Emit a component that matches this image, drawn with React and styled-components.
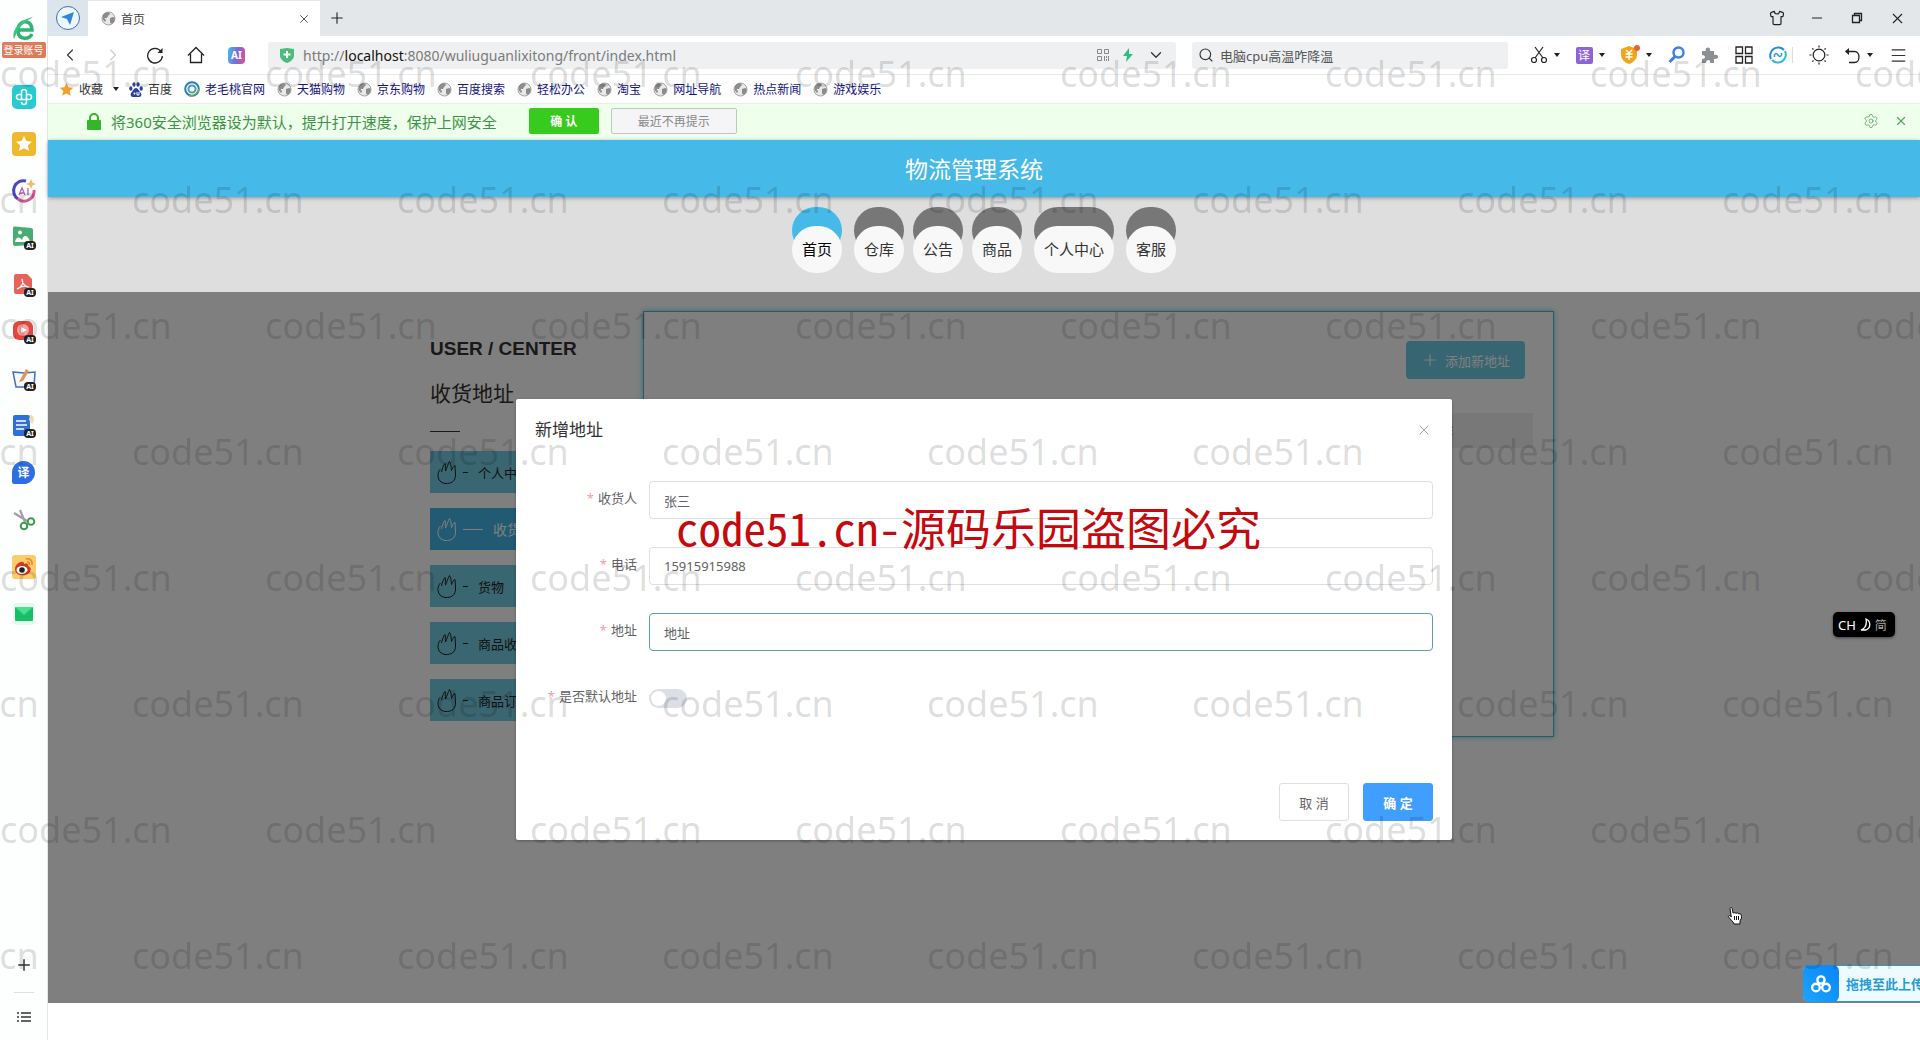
import React, { useState } from 'react';
import styled, { createGlobalStyle } from 'styled-components';
import { Shirt, Minus, X, Plus, ChevronLeft, ChevronRight, ChevronDown, Search, Menu, Settings } from 'lucide-react';

const GlobalStyle = createGlobalStyle`
  * { box-sizing: border-box; }
  body {
    margin: 0;
    overflow: hidden;
    background: #fff;
    font-family: 'Noto Sans', 'Noto Sans CJK SC', sans-serif;
    font-size: 13px;
    color: #333;
  }
  button, input { font-family: inherit; }
  button { padding: 0; border: 0; background: none; color: inherit; }
  a { text-decoration: none; color: inherit; }
  svg { display: block; flex: none; }
`;

const Screen = styled.div`
  position: relative;
  display: flex;
  height: 100vh;
  overflow: hidden;
`;

/* ---------- side bar ---------- */

const SideBar = styled.aside`
  flex: none;
  width: 48px;
  display: flex;
  flex-direction: column;
  align-items: center;
  border-right: 1px solid #e3e5e8;
  background: #fdfefe;
`;

const Account = styled.button`
  height: 73px;
  padding-top: 16px;
  display: flex;
  flex-direction: column;
  align-items: center;
`;

const AccountTag = styled.span`
  width: 44px;
  height: 16px;
  border-radius: 2px;
  background: #dd7c5c;
  color: #fff;
  font-size: 10px;
  line-height: 16px;
  text-align: center;
`;

const SideButton = styled.button`
  position: relative;
  width: 47px;
  height: 47px;
  display: flex;
  align-items: center;
  justify-content: center;
`;

const AiTag = styled.span`
  position: absolute;
  right: 11px;
  bottom: 11px;
  width: 12px;
  height: 9px;
  border-radius: 4px;
  background: #222;
  color: #fff;
  font-size: 7px;
  font-weight: 700;
  line-height: 9px;
`;

const SideBottom = styled.div`
  margin-top: auto;
  display: flex;
  flex-direction: column;
  align-items: center;
  color: #333;

  hr {
    width: 20px;
    margin: 4px 0 0;
    border: 0;
    border-top: 1px solid #e0e0e0;
  }
`;

/* ---------- browser chrome ---------- */

const Browser = styled.div`
  flex: 1;
  min-width: 0;
  display: flex;
  flex-direction: column;
`;

const TabBar = styled.div`
  height: 36px;
  flex: none;
  display: flex;
  align-items: center;
  background: #e3e7ea;
  color: #222;
`;

const Compass = styled.button`
  width: 40px;
  height: 36px;
  display: flex;
  align-items: center;
  justify-content: center;
  background: #dce4ec;
`;

const Tab = styled.div`
  width: 232px;
  height: 35px;
  margin-top: 1px;
  padding: 0 9px 0 13px;
  display: flex;
  align-items: center;
  gap: 5px;
  background: #fff;
  font-size: 12px;
  color: #444;

  button { margin-left: auto; }
`;

const NewTab = styled.button`
  margin-left: 8px;
`;

const WindowButtons = styled.div`
  margin-left: auto;
  padding-right: 14px;
  display: flex;
  align-items: center;
  gap: 24px;
`;

const ToolBar = styled.div`
  height: 39px;
  flex: none;
  padding: 0 12px;
  display: flex;
  align-items: center;
  border-bottom: 1px solid #ebebeb;
  color: #333;
`;

const NavButtons = styled.div`
  width: 208px;
  display: flex;
  align-items: center;
  gap: 23px;
`;

const Address = styled.div`
  flex: 1;
  height: 27px;
  padding: 0 11px;
  display: flex;
  align-items: center;
  border-radius: 3px;
  background: #eff0f2;
`;

const Url = styled.div`
  flex: 1;
  padding-left: 8px;
  font-size: 14px;
  color: #7b7b7b;
  white-space: nowrap;

  b { font-weight: 400; color: #111; }
`;

const AddressIcons = styled.div`
  display: flex;
  align-items: center;
  gap: 13px;
`;

const SearchBox = styled.label`
  width: 316px;
  height: 27px;
  margin-left: 16px;
  padding: 0 6px;
  display: flex;
  align-items: center;
  gap: 6px;
  border-radius: 3px;
  background: #eff0f2;

  input {
    flex: 1;
    min-width: 0;
    padding: 0;
    border: 0;
    outline: 0;
    background: none;
    font-size: 13px;
    color: #555;
  }
`;

const Tools = styled.div`
  width: 400px;
  padding-left: 22px;
  display: flex;
  align-items: center;
  justify-content: space-between;
`;

const Tool = styled.button`
  display: flex;
  align-items: center;
  gap: 6px;
`;

const Caret = styled.i`
  border: 3px solid transparent;
  border-top: 4px solid #222;
  border-bottom: 0;
`;

const ToolDivider = styled.i`
  width: 1px;
  height: 16px;
  margin-left: -10px;
  background: #ddd;
`;

const Translate = styled.span`
  width: ${(p) => p.$size}px;
  height: ${(p) => p.$size}px;
  border-radius: ${(p) => (p.$round ? '50% 50% 50% 2px' : '2px')};
  background: ${(p) => (p.$round ? '#2d6fe0' : '#8d63d6')};
  color: #fff;
  font-size: 12px;
  font-weight: ${(p) => (p.$round ? 700 : 400)};
  line-height: ${(p) => p.$size}px;
  text-align: center;
`;

const AiLogo = styled.span`
  display: block;
  width: 17px;
  height: 17px;
  border-radius: 4px;
  background: linear-gradient(100deg, #3fc1ee, #7a6ad8 50%, #e24d9c);
  color: #fff;
  font-size: 10px;
  font-weight: 700;
  line-height: 17px;
  text-align: center;
`;

const Bookmarks = styled.nav`
  height: 29px;
  flex: none;
  padding-left: 11px;
  display: flex;
  align-items: center;
  gap: 12px;
  border-bottom: 1px solid #ececec;
  background: #fff;

  ${Caret} { margin: 0 -2px; }
`;

const Bookmark = styled.a`
  display: flex;
  align-items: center;
  gap: 5px;
  font-size: 12px;
  white-space: nowrap;
  color: ${(p) => (p.$plain ? '#333' : '#15157e')};
`;

const Notice = styled.div`
  height: 36px;
  flex: none;
  padding: 0 12px 2px 39px;
  display: flex;
  align-items: center;
  background: #eeffec;
  color: #3f9148;
`;

const NoticeText = styled.span`
  margin: 0 32px 0 10px;
  font-size: 15px;
  white-space: nowrap;
`;

const NoticeButton = styled.button`
  width: ${(p) => (p.$primary ? 70 : 126)}px;
  height: 26px;
  margin-right: 12px;
  border: 1px solid ${(p) => (p.$primary ? '#36cb1d' : '#c2c6c2')};
  border-radius: 2px;
  background: ${(p) => (p.$primary ? '#36cb1d' : '#f5f5f7')};
  color: ${(p) => (p.$primary ? '#fff' : '#888')};
  font-size: 12px;
  font-weight: ${(p) => (p.$primary ? 700 : 400)};
`;

const NoticeTools = styled.div`
  margin-left: auto;
  display: flex;
  align-items: center;
  gap: 15px;
  color: #5aa55f;
`;

/* ---------- site ---------- */

const SiteHeader = styled.header`
  position: relative;
  height: 57px;
  flex: none;
  padding: 0 20px 2px 0;
  display: flex;
  align-items: center;
  justify-content: center;
  background: #45bae8;
  box-shadow: 0 1px 4px rgba(0, 0, 0, 0.35);
  color: #fff;

  h1 {
    margin: 0;
    font-size: 23px;
    font-weight: 400;
  }
`;

const SiteNav = styled.nav`
  height: 95px;
  flex: none;
  padding: 29px 3px 0 0;
  display: flex;
  justify-content: center;
  gap: 9px;
  background: #dedede;
`;

const NavPill = styled.a`
  height: 47px;
  margin: 0 ${(p) => (p.$spaced ? 3 : 0)}px;
  padding: 0 10px;
  border-radius: 24px;
  background: #f8f8f8;
  box-shadow: 0 -19px 0 ${(p) => (p.$active ? '#45bae8' : '#777')};
  color: ${(p) => (p.$active ? '#000' : '#333')};
  font-size: 15px;
  line-height: 46px;
`;

const Main = styled.main`
  position: relative;
  flex: 1;
  min-height: 0;
  padding: 19px 0 0 16px;
`;

const Content = styled.div`
  max-width: 1124px;
  margin: 0 auto;
  display: flex;
  gap: 21px;
`;

const UserMenu = styled.div`
  width: 192px;
  padding-top: 24px;

  h2 {
    margin: 0;
    font: bold 19px/28px 'Liberation Sans', sans-serif;
  }

  h3 {
    margin: 14px 0 0;
    font-size: 21px;
    font-weight: 400;
    line-height: 32px;
  }
`;

const ShortLine = styled.hr`
  width: 30px;
  margin: 22px 0 19px;
  border: 0;
  border-top: 1px solid #333;
`;

const MenuItem = styled.a`
  height: 42px;
  margin-bottom: 15px;
  padding-left: 7px;
  display: flex;
  align-items: center;
  gap: 6px;
  background: ${(p) => (p.$active ? '#45b4e6' : '#74cce2')};
  color: ${(p) => (p.$active ? '#fff' : '#222')};
  font-size: ${(p) => (p.$active ? 14 : 13)}px;
  white-space: nowrap;

  i {
    width: ${(p) => (p.$active ? 20 : 5)}px;
    margin-right: 4px;
    border-top: 1px solid;
  }
`;

const Panel = styled.section`
  flex: 1;
  height: 426px;
  padding: 29px 20px;
  border: 1px solid #4fb4cc;
  box-shadow: 0 0 6px #6fd3e6;
`;

const AddButton = styled.button`
  width: 119px;
  height: 38px;
  margin: 0 8px 34px auto;
  display: flex;
  align-items: center;
  justify-content: center;
  gap: 6px;
  border-radius: 4px;
  background: #6fcbe4;
  color: #fff;
  font-size: 13px;
`;

const AddressTable = styled.table`
  width: 100%;
  border-collapse: collapse;
  table-layout: fixed;

  th {
    height: 35px;
    padding: 0 12px 0 0;
    background: #f1f1f1;
    font-size: 13px;
    font-weight: 400;
  }
`;

const Mask = styled.div`
  position: absolute;
  inset: 0;
  padding-top: 107px;
  background: rgba(0, 0, 0, 0.5);
`;

const Dialog = styled.form`
  width: 50%;
  margin: 0 auto;
  border-radius: 2px;
  background: #fff;
  box-shadow: 0 1px 3px rgba(0, 0, 0, 0.3);
`;

const DialogHead = styled.div`
  padding: 20px 20px 10px 19px;
  display: flex;
  align-items: center;
  justify-content: space-between;
  color: #303133;
  font-size: 17px;
  line-height: 22px;
`;

const DialogBody = styled.div`
  padding: 30px 19px 28px;
`;

const Field = styled.div`
  height: 38px;
  margin-bottom: 28px;
  display: flex;
  align-items: center;

  label {
    width: 114px;
    padding-right: 12px;
    color: #606266;
    font-size: 13px;
    line-height: 34px;
    text-align: right;
    align-self: flex-start;
    white-space: nowrap;
  }

  label::before {
    content: '*';
    margin-right: 4px;
    color: #f3a0a0;
  }
`;

const TextInput = styled.input`
  flex: 1;
  min-width: 0;
  height: 38px;
  padding: 0 14px;
  border: 1px solid ${(p) => (p.$focused ? '#5a9fa8' : '#dcdfe3')};
  border-radius: 4px;
  outline: 0;
  color: #606266;
  font-size: 13px;
`;

const Switch = styled.input`
  appearance: none;
  width: 38px;
  height: 19px;
  margin: 0;
  border-radius: 10px;
  background: #dcdfe6;

  &::before {
    content: '';
    display: block;
    width: 15px;
    height: 15px;
    margin: 2px;
    border-radius: 50%;
    background: #fff;
  }

  &:checked { background: #409eff; }
  &:checked::before { margin-left: 21px; }
`;

const DialogFoot = styled.div`
  padding: 10px 19px 19px;
  display: flex;
  justify-content: flex-end;
  gap: 14px;
`;

const DialogButton = styled.button`
  width: 70px;
  height: 38px;
  border: 1px solid ${(p) => (p.$primary ? '#409eff' : '#dcdfe6')};
  border-radius: 3px;
  background: ${(p) => (p.$primary ? '#409eff' : '#fff')};
  color: ${(p) => (p.$primary ? '#fff' : '#606266')};
  font-size: 13px;
  font-weight: ${(p) => (p.$primary ? 700 : 400)};
`;

const StatusBar = styled.footer`
  height: 37px;
  flex: none;
  background: #fff;
`;

/* ---------- floating things ---------- */

const ImeBadge = styled.div`
  position: absolute;
  right: 25px;
  top: 612px;
  width: 62px;
  height: 25px;
  padding-left: 5px;
  display: flex;
  align-items: center;
  gap: 4px;
  border-radius: 5px;
  background: #000;
  box-shadow: 0 1px 3px rgba(0, 0, 0, 0.5);
  color: #fff;
  font-size: 13px;

  small { font-size: 12px; color: #aaa; }
`;

const UploadDock = styled.button`
  position: absolute;
  left: calc(100% - 117px);
  bottom: 38px;
  height: 37px;
  width: 140px;
  display: flex;
  align-items: center;
  gap: 7px;
  border-top: 1px solid #3f93bb;
  border-bottom: 1px solid #3f93bb;
  border-radius: 6px 0 0 6px;
  background: #ecfbff;
  color: #2a9bd2;
  font-size: 13px;
  font-weight: 700;
  white-space: nowrap;
`;

const DockIcon = styled.span`
  width: 36px;
  height: 37px;
  display: flex;
  align-items: center;
  justify-content: center;
  border-radius: 6px;
  background: linear-gradient(225deg, #0a84f8, #1ba5fb);
`;

const Pointer = styled.svg`
  position: absolute;
  left: 1727px;
  top: 907px;
`;

const Watermarks = styled.div`
  position: absolute;
  inset: 0;
  padding-top: 11px;
  overflow: hidden;
  pointer-events: none;
`;

const WatermarkRow = styled.div`
  display: flex;
  margin-left: ${(p) => (p.$shifted ? -133 : 0)}px;

  span {
    flex: none;
    width: 265px;
    font: 400 36px/126px 'Noto Sans', sans-serif;
    color: rgba(0, 0, 0, 0.15);
  }
`;

const RedMark = styled.div`
  position: absolute;
  left: 676px;
  top: 495px;
  color: #c40a0e;
  font: 400 45px/64px 'Noto Sans CJK SC', sans-serif;
  font-feature-settings: 'hwid';
  white-space: nowrap;
  pointer-events: none;
`;

/* ---------- drawings ---------- */

const Globe = () => (
  <svg width="15" height="15" viewBox="0 0 15 15">
    <circle cx="7.500" cy="7.500" r="6.500" fill="#e8e8e8" stroke="#a5a5a5" />
    <path d="M2 4C4 1 7 1 8 1.500L9 3 7 5 6 7 3.500 7 5 9.500 4 11 1.500 8zM9 7l3-1 2 1-1 4-3 2-1-2z" fill="#8b8b8b" />
  </svg>
);

const Star = ({ size, fill }) => (
  <svg width={size} height={size} viewBox="0 0 24 24">
    <path d="M12 1.500l3.200 7 7.600.8-5.700 5.200 1.700 7.600L12 18.200l-6.800 3.900 1.700-7.600L1.200 9.300l7.600-.8z" fill={fill} />
  </svg>
);

const Flame = () => (
  <svg width="20" height="25" viewBox="0 0 20 25" fill="none" stroke="currentColor" strokeWidth="1">
    <path d="M3.500 9C0 12-1 22 8 23.500c7 .5 11-3 10.500-9.500L18 5.500c-1.500.5-2.500 2.500-3.500 5C14 8 14.500 4 12.500 1.500 11 4 10 8 8.500 11 8 8 9 5 8 3.500 6.500 5 5.500 8 4.500 12" />
  </svg>
);

const Logo = () => (
  <svg width="26" height="26" viewBox="0 0 26 26" fill="none">
    <path d="M21 18c-3 6-13 6-14-2C6 8 12 5 16 6c4 1 5 5 5 8H8" stroke="#2fb573" strokeWidth="3.500" />
    <path d="M3 23C0 14 10 3 22 1c-5 3-12 7-16 15z" fill="#3cc483" />
  </svg>
);

const sideIcons = [
  {
    name: '健康',
    icon: (
      <svg width="24" height="24" viewBox="0 0 24 24">
        <rect width="24" height="24" rx="5" fill="#25cbd0" />
        <path d="M9.500 14V7a2.500 2.500 0 015 0v10a2.500 2.500 0 01-5 0M14 9.500h3a2.500 2.500 0 010 5H7a2.500 2.500 0 010-5h2" fill="none" stroke="#fff" strokeWidth="1.500" />
      </svg>
    ),
  },
  {
    name: '收藏夹',
    icon: (
      <svg width="24" height="24" viewBox="0 0 24 24">
        <rect width="24" height="24" rx="4" fill="#efb92d" />
        <path d="M12 4l2.400 5 5.600.7-4.100 3.800 1.100 5.500-5-2.700L7 19l1.100-5.500L4 9.700 9.600 9z" fill="#fff" />
      </svg>
    ),
  },
  {
    name: 'AI 助手',
    icon: (
      <svg width="26" height="26" viewBox="0 0 26 26" fill="none">
        <path d="M15 3A10 10 0 007 21" stroke="#4b45c8" strokeWidth="3" />
        <path d="M7 21a10 10 0 0016-9" stroke="#d45a8e" strokeWidth="3" />
        <path d="M20 1l1.500 3.500L25 6l-3.500 1.500L20 11l-1.500-3.500L15 6l3.500-1.500z" fill="#edc06b" />
        <path d="M8 17l3-7 3 7M9 15h4M17 10v7" stroke="#b75bb8" strokeWidth="1.300" />
      </svg>
    ),
  },
  {
    name: '图片',
    ai: true,
    icon: (
      <svg width="24" height="24" viewBox="0 0 24 24">
        <path d="M1 2q0-2 2-1.500l16 1.500q2 0 2 2v13q0 2-2 2L3 20q-2 0-2-2z" fill="#47ad72" />
        <circle cx="8" cy="6.500" r="2" fill="#fff" />
        <path d="M3 16c1-5 4-6 7-2 1-5 6-6 8 2z" fill="#fff" />
      </svg>
    ),
  },
  {
    name: 'PDF',
    ai: true,
    icon: (
      <svg width="24" height="24" viewBox="0 0 24 24">
        <path d="M2 3a2 2 0 012-2h11l5 5v13a2 2 0 01-2 2H4a2 2 0 01-2-2z" fill="#e7635a" />
        <path d="M10 6c2 4 0 8-5 10 4-3 9-3 12-2-4 0-7-4-7-8z" fill="none" stroke="#fff" strokeWidth="1.200" />
      </svg>
    ),
  },
  {
    name: '视频',
    ai: true,
    icon: (
      <svg width="24" height="24" viewBox="0 0 24 24">
        <rect x="1" y="1" width="20" height="19" rx="6" fill="#e4473f" />
        <circle cx="11" cy="10" r="6" fill="#f4a39d" />
        <path d="M9 7l6 3-6 3z" fill="#fff" />
      </svg>
    ),
  },
  {
    name: '绘图',
    ai: true,
    icon: (
      <svg width="24" height="24" viewBox="0 0 24 24">
        <path d="M1 5l11 1 11-1-1 15H4z" fill="#f5f8ff" stroke="#4570c0" strokeWidth="1.500" />
        <path d="M8 13l6-11 3 2-6 10-4 1z" fill="#d9985f" />
      </svg>
    ),
  },
  {
    name: '文档',
    ai: true,
    icon: (
      <svg width="24" height="24" viewBox="0 0 24 24">
        <rect x="1" y="1" width="17" height="21" rx="2" fill="#2f6fd8" />
        <path d="M4 7h10M4 11h11M4 15h8" stroke="#fff" strokeWidth="1.500" />
        <path d="M18 1c5 0 5 6 2 9l-3-4z" fill="#f2dfa8" />
      </svg>
    ),
  },
  { name: '翻译', icon: <Translate $size={23} $round>译</Translate> },
  {
    name: '截图',
    icon: (
      <svg width="24" height="24" viewBox="0 0 24 24" fill="none">
        <path d="M2 5l13 8M8 2l5 12" stroke="#a59dab" strokeWidth="2.200" />
        <circle cx="12" cy="18" r="3.300" stroke="#3f9a50" strokeWidth="2" />
        <circle cx="19" cy="13.500" r="3.300" stroke="#3f9a50" strokeWidth="2" />
      </svg>
    ),
  },
  {
    name: '微博',
    icon: (
      <svg width="24" height="24" viewBox="0 0 24 24">
        <rect width="24" height="24" rx="3" fill="#fbcd6c" />
        <path d="M3 14c0-4 5-8 8-7 1 0 1 1 1 2 3-1 5 0 4 2 3 1 4 4 1 7-4 4-14 3-14-4z" fill="#cf3b22" />
        <ellipse cx="10" cy="15" rx="5.500" ry="4" fill="#fff" />
        <circle cx="10" cy="15" r="2.800" fill="#222" />
        <path d="M14 4c4-1 7 2 6 6M15 7c2 0 3 1 2 3" fill="none" stroke="#e58a27" strokeWidth="1.500" />
      </svg>
    ),
  },
  {
    name: '邮箱',
    icon: (
      <svg width="24" height="24" viewBox="0 0 24 24">
        <rect x="1" y="1" width="22" height="22" rx="4" fill="#e9f8ef" />
        <rect x="3" y="5" width="18" height="14" rx="1" fill="#16bf68" />
        <path d="M3 5h18l-9 8z" fill="#4adf92" />
      </svg>
    ),
  },
];

const globeLinks = ['天猫购物', '京东购物', '百度搜索', '轻松办公', '淘宝', '网址导航', '热点新闻', '游戏娱乐'];

const navItems = [
  { text: '首页', active: true, spaced: true },
  { text: '仓库' },
  { text: '公告' },
  { text: '商品' },
  { text: '个人中心', spaced: true },
  { text: '客服' },
];

const menuItems = ['个人中心', '收货地址', '货物', '商品收藏', '商品订单'];

const SideBarArea = () => (
  <SideBar>
    <Account>
      <Logo />
      <AccountTag>登录账号</AccountTag>
    </Account>
    {sideIcons.map((item) => (
      <SideButton key={item.name} aria-label={item.name}>
        {item.icon}
        {item.ai && <AiTag>AI</AiTag>}
      </SideButton>
    ))}
    <SideBottom>
      <SideButton aria-label="添加"><Plus size={18} strokeWidth={2} /></SideButton>
      <hr />
      <SideButton aria-label="列表">
        <svg width="14" height="12" viewBox="0 0 14 12" stroke="#333" strokeWidth="1.500">
          <path d="M0 2h2M4 2h10M0 6h2M4 6h10M0 10h2M4 10h10" />
        </svg>
      </SideButton>
    </SideBottom>
  </SideBar>
);

const TabArea = () => (
  <TabBar>
    <Compass aria-label="导航">
      <svg width="26" height="26" viewBox="0 0 26 26">
        <circle cx="13" cy="13" r="11.500" fill="#eef6ff" stroke="#3d6fb4" />
        <path d="M19 7l-4 13-3-6-6-2z" fill="#2f86dc" />
      </svg>
    </Compass>
    <Tab>
      <Globe />
      首页
      <button aria-label="关闭标签页"><X size={14} strokeWidth={1.500} /></button>
    </Tab>
    <NewTab aria-label="新标签页"><Plus size={18} strokeWidth={1.500} /></NewTab>
    <WindowButtons>
      <button aria-label="皮肤"><Shirt size={16} strokeWidth={1.800} /></button>
      <button aria-label="最小化"><Minus size={16} strokeWidth={1.500} /></button>
      <button aria-label="还原">
        <svg width="16" height="16" viewBox="0 0 16 16" fill="none" stroke="#222" strokeWidth="1.300">
          <path d="M3.500 5.500h7v7h-7zM5.500 5.500v-2h7v7h-2" />
        </svg>
      </button>
      <button aria-label="关闭"><X size={17} strokeWidth={1.500} /></button>
    </WindowButtons>
  </TabBar>
);

const ToolArea = () => (
  <ToolBar>
    <NavButtons>
      <button aria-label="后退"><ChevronLeft size={20} strokeWidth={1.300} /></button>
      <button aria-label="前进"><ChevronRight size={20} strokeWidth={1.300} color="#ccc" /></button>
      <button aria-label="刷新">
        <svg width="18" height="18" viewBox="0 0 18 18" fill="none" stroke="#222" strokeWidth="1.300">
          <path d="M15 5.500A7.300 7.300 0 1016.300 10" />
          <path d="M16.500 2v5h-5z" fill="#222" stroke="none" />
        </svg>
      </button>
      <button aria-label="主页">
        <svg width="18" height="18" viewBox="0 0 18 18" fill="none" stroke="#222" strokeWidth="1.300">
          <path d="M1 9.500L9 1.500l8 8M3.500 8v8.500h11V8" />
        </svg>
      </button>
      <button aria-label="AI"><AiLogo>AI</AiLogo></button>
    </NavButtons>
    <Address>
      <svg width="16" height="16" viewBox="0 0 16 16">
        <path d="M1 2l7-1 7 1v7c0 3-4 6-7 7-3-1-7-4-7-7z" fill="#4cbb7c" />
        <path d="M8 4v7M4.500 7.500h7" stroke="#fff" strokeWidth="2" />
      </svg>
      <Url>http://<b>localhost</b>:8080/wuliuguanlixitong/front/index.html</Url>
      <AddressIcons>
        <svg width="12" height="12" viewBox="0 0 12 12" fill="none" stroke="#888">
          <path d="M.5.500h4v4h-4zM7.500.500h4v4h-4zM.5 7.500h4v4h-4zM7.500 7v5M9.500 7v2M11.500 7v5M9.500 10v2" />
        </svg>
        <svg width="12" height="14" viewBox="0 0 12 14"><path d="M7 0L1 8h4l-1 6 7-8H7z" fill="#27c281" /></svg>
        <ChevronDown size={18} strokeWidth={1.700} />
      </AddressIcons>
    </Address>
    <SearchBox>
      <Search size={16} strokeWidth={1.700} />
      <input aria-label="搜索" defaultValue="电脑cpu高温咋降温" />
    </SearchBox>
    <Tools>
      <Tool aria-label="剪切">
        <svg width="18" height="18" viewBox="0 0 18 18" fill="none" stroke="#222" strokeWidth="1.200">
          <path d="M5 1l8 11M13 1L5 12" />
          <circle cx="4" cy="14" r="2.500" />
          <circle cx="14" cy="14" r="2.500" />
        </svg>
        <Caret />
      </Tool>
      <Tool aria-label="翻译"><Translate $size={17}>译</Translate><Caret /></Tool>
      <Tool aria-label="优惠">
        <svg width="20" height="20" viewBox="0 0 20 20">
          <path d="M1 4l8-3 8 3v6c0 5-5 8-8 9-3-1-8-4-8-9z" fill="#f0a51e" />
          <path d="M6 5l3 3 3-3M5.500 9h7M5.500 12h7M9 8v7" fill="none" stroke="#fff" strokeWidth="1.300" />
          <circle cx="17" cy="3" r="3" fill="#e7603f" />
        </svg>
        <Caret />
      </Tool>
      <Tool aria-label="放大镜">
        <svg width="18" height="18" viewBox="0 0 18 18" fill="none" stroke="#4380de">
          <circle cx="10.500" cy="6.500" r="5" strokeWidth="2.500" />
          <path d="M7 10.500L1.500 16" strokeWidth="3" />
        </svg>
      </Tool>
      <Tool aria-label="扩展">
        <svg width="18" height="18" viewBox="0 0 18 18">
          <path d="M1 5h4C3 1 10 0 9 5h4v4c5-2 6 5 0 4v4H9c1-4-4-4-4 0H1v-4c4 0 4-4 0-4z" fill="#8d9093" />
        </svg>
      </Tool>
      <Tool aria-label="应用">
        <svg width="18" height="18" viewBox="0 0 18 18" fill="none" stroke="#222" strokeWidth="1.300">
          <path d="M1 1h6.500v6.500H1zM10.500 1H17v6.500h-6.500zM1 10.500h6.500V17H1zM10.500 10.500H17V17h-6.500z" />
        </svg>
      </Tool>
      <Tool aria-label="内核">
        <svg width="18" height="18" viewBox="0 0 18 18" fill="none">
          <path d="M15 4A8 8 0 002 13" stroke="#2a8bd0" strokeWidth="2" />
          <path d="M3 14A8 8 0 0016 5" stroke="#35b6dc" strokeWidth="2" />
          <path d="M5.500 11V9c1-2 2-2 3.500 0s2.500 2 3.500 0V7" stroke="#2f9fd6" strokeWidth="1.600" />
        </svg>
      </Tool>
      <ToolDivider />
      <Tool aria-label="亮度">
        <svg width="20" height="20" viewBox="0 0 20 20" fill="none" stroke="#222" strokeWidth="1.200">
          <circle cx="10" cy="10" r="5.800" />
          <path d="M10 .5v2M10 17.500v2M.5 10h2M17.500 10h2M3.300 3.300l1.200 1.200M15.500 15.500l1.200 1.200M3.300 16.700l1.200-1.200M15.500 4.500l1.200-1.200" />
        </svg>
      </Tool>
      <Tool aria-label="恢复">
        <svg width="17" height="17" viewBox="0 0 17 17" fill="none" stroke="#222" strokeWidth="1.300">
          <path d="M2 4.500h8.500c6 0 6 11 0 11H5" />
          <path d="M5 1L1 4.500 5 8z" fill="#222" stroke="none" />
        </svg>
        <Caret />
      </Tool>
      <Tool aria-label="菜单"><Menu size={19} strokeWidth={1.500} /></Tool>
    </Tools>
  </ToolBar>
);

const BookmarkArea = () => (
  <Bookmarks>
    <Bookmark href="#" $plain><Star size={15} fill="#f2a02c" />收藏</Bookmark>
    <Caret />
    <Bookmark href="#" $plain>
      <svg width="14" height="15" viewBox="0 0 14 15" fill="#2e3f9e">
        <ellipse cx="1.800" cy="6.500" rx="1.600" ry="2.200" />
        <ellipse cx="5" cy="2.500" rx="1.600" ry="2.300" />
        <ellipse cx="9" cy="2.500" rx="1.600" ry="2.300" />
        <ellipse cx="12.200" cy="6.500" rx="1.600" ry="2.200" />
        <path d="M7 6c2 0 3 3 5 5 1 2 0 4-2 4H4c-2 0-3-2-2-4 2-2 3-5 5-5z" />
        <circle cx="5.500" cy="11.500" r="1" fill="#fff" />
        <path d="M8 10v3h2v-3" fill="none" stroke="#fff" />
      </svg>
      百度
    </Bookmark>
    <Bookmark href="#">
      <svg width="16" height="16" viewBox="0 0 16 16" fill="none">
        <circle cx="8" cy="8" r="6.800" stroke="#2b7fb0" strokeWidth="2" />
        <circle cx="8" cy="8" r="3.600" stroke="#3e9fb8" strokeWidth="2" />
        <path d="M5 15c5 0 9-3 10-7" stroke="#7cb342" strokeWidth="1.500" />
      </svg>
      老毛桃官网
    </Bookmark>
    {globeLinks.map((text) => (
      <Bookmark key={text} href="#"><Globe />{text}</Bookmark>
    ))}
  </Bookmarks>
);

const NoticeArea = () => (
  <Notice>
    <svg width="14" height="17" viewBox="0 0 14 17">
      <rect y="7" width="14" height="10" rx="1" fill="#35b52b" />
      <path d="M3 8V5a4 4 0 018 0v3" fill="none" stroke="#35b52b" strokeWidth="2" />
    </svg>
    <NoticeText>将360安全浏览器设为默认，提升打开速度，保护上网安全</NoticeText>
    <NoticeButton $primary>确 认</NoticeButton>
    <NoticeButton>最近不再提示</NoticeButton>
    <NoticeTools>
      <button aria-label="设置"><Settings size={16} strokeWidth={1.200} /></button>
      <button aria-label="关闭提示"><X size={14} strokeWidth={2} /></button>
    </NoticeTools>
  </Notice>
);

const AddressDialog = () => {
  const [isDefault, setIsDefault] = useState(false);

  return (
    <Mask>
      <Dialog onSubmit={(e) => e.preventDefault()}>
        <DialogHead>
          新增地址
          <button type="button" aria-label="关闭"><X size={16} strokeWidth={1.300} color="#909399" /></button>
        </DialogHead>
        <DialogBody>
          <Field>
            <label htmlFor="name">收货人</label>
            <TextInput id="name" defaultValue="张三" />
          </Field>
          <Field>
            <label htmlFor="phone">电话</label>
            <TextInput id="phone" defaultValue="15915915988" />
          </Field>
          <Field>
            <label htmlFor="address">地址</label>
            <TextInput id="address" defaultValue="地址" $focused />
          </Field>
          <Field>
            <label htmlFor="isdefault">是否默认地址</label>
            <Switch
              id="isdefault"
              type="checkbox"
              checked={isDefault}
              onChange={(e) => setIsDefault(e.target.checked)}
            />
          </Field>
        </DialogBody>
        <DialogFoot>
          <DialogButton type="button">取 消</DialogButton>
          <DialogButton type="submit" $primary>确 定</DialogButton>
        </DialogFoot>
      </Dialog>
    </Mask>
  );
};

const App = () => {
  return (
    <Screen>
      <GlobalStyle />
      <SideBarArea />

      <Browser>
        <TabArea />
        <ToolArea />
        <BookmarkArea />
        <NoticeArea />

        <SiteHeader><h1>物流管理系统</h1></SiteHeader>
        <SiteNav>
          {navItems.map((item) => (
            <NavPill key={item.text} href="#" $active={item.active} $spaced={item.spaced}>{item.text}</NavPill>
          ))}
        </SiteNav>

        <Main>
          <Content>
            <UserMenu>
              <h2>USER / CENTER</h2>
              <h3>收货地址</h3>
              <ShortLine />
              {menuItems.map((text) => (
                <MenuItem key={text} href="#" $active={text === '收货地址'}>
                  <Flame />
                  <i />
                  {text}
                </MenuItem>
              ))}
            </UserMenu>
            <Panel>
              <AddButton><Plus size={18} strokeWidth={1.500} />添加新地址</AddButton>
              <AddressTable>
                <thead>
                  <tr>
                    <th>收货人</th>
                    <th>电话</th>
                    <th>地址</th>
                    <th>默认</th>
                    <th>操作</th>
                  </tr>
                </thead>
              </AddressTable>
            </Panel>
          </Content>
          <AddressDialog />
        </Main>
        <StatusBar />
      </Browser>

      <ImeBadge>
        CH
        <svg width="11" height="13" viewBox="0 0 11 13" fill="none" stroke="#fff" strokeWidth="1.300">
          <path d="M6 1c5 2 5 9 0 11H1c5-2 6-6 5-11z" />
        </svg>
        <small>简</small>
      </ImeBadge>
      <UploadDock>
        <DockIcon>
          <svg width="22" height="18" viewBox="0 0 22 18" fill="none" stroke="#fff" strokeWidth="2.400">
            <circle cx="11" cy="5" r="3.600" />
            <circle cx="6" cy="12.500" r="3.800" />
            <circle cx="16" cy="12.500" r="3.800" />
          </svg>
        </DockIcon>
        拖拽至此上传
      </UploadDock>
      <Pointer width="16" height="18" viewBox="0 0 16 18">
        <path d="M3 1.500c0-1.300 2-1.300 2.200 0L6 6l1.500-.3L9 6.200l1.500-.2 1.200.8 1.300-.1c1.300.3 1.500 2 1.500 4.300l-1.500 3V17H7l-1-2-4.500-5c-.6-1 .6-2 1.600-1L4.300 10z" fill="#fff" stroke="#111" />
        <path d="M7.500 9v4M9.500 9v4M11.500 9v4" stroke="#111" />
      </Pointer>

      <Watermarks aria-hidden="true">
        {[0, 1, 2, 3, 4, 5, 6, 7].map((row) => (
          <WatermarkRow key={row} $shifted={row % 2 === 1}>
            {[0, 1, 2, 3, 4, 5, 6, 7].map((col) => <span key={col}>code51.cn</span>)}
          </WatermarkRow>
        ))}
      </Watermarks>
      <RedMark>code51.cn-源码乐园盗图必究</RedMark>
    </Screen>
  );
};

export default App;
